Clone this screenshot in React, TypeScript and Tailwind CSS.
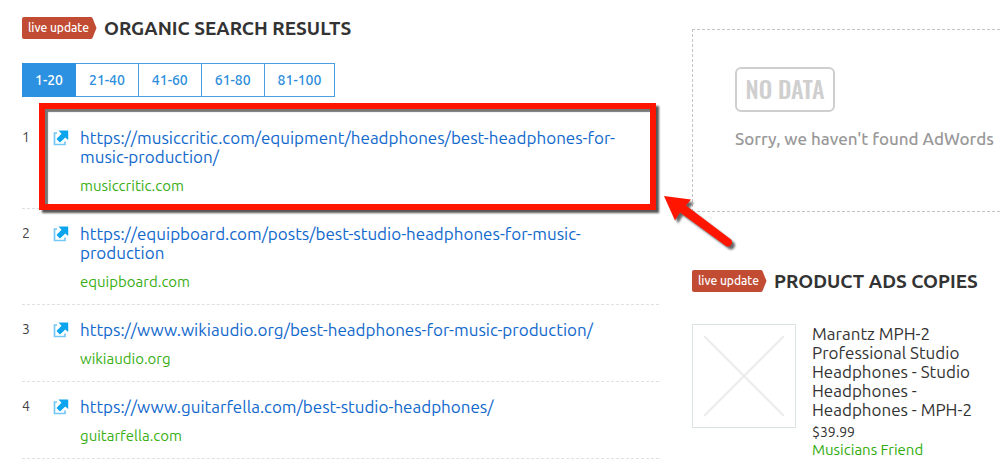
const pages = ["1-20", "21-40", "41-60", "61-80", "81-100"];

const results = [
  {
    url: "https://musiccritic.com/equipment/headphones/best-headphones-for-music-production/",
    domain: "musiccritic.com",
    highlighted: true,
  },
  {
    url: "https://equipboard.com/posts/best-studio-headphones-for-music-production",
    domain: "equipboard.com",
  },
  {
    url: "https://www.wikiaudio.org/best-headphones-for-music-production/",
    domain: "wikiaudio.org",
  },
  {
    url: "https://www.guitarfella.com/best-studio-headphones/",
    domain: "guitarfella.com",
  },
];

function SectionHeading({ children }: { children: string }) {
  return (
    <div className="flex items-center gap-[7px]">
      <span className="relative flex h-[22px] w-[75px] shrink-0 items-center pl-[6px] text-[12px] font-medium whitespace-nowrap text-white">
        <svg className="absolute inset-0" width="75" height="22" viewBox="0 0 75 22" aria-hidden="true">
          <path d="M2 0H68.500Q70 0 70.500 1L74.500 11L70.500 21Q70 22 68.500 22H2Q0 22 0 20V2Q0 0 2 0Z" fill="#c14b33" />
        </svg>
        <span className="relative">live update</span>
      </span>
      <h2 className="text-[19px] leading-[22px] font-bold whitespace-nowrap text-[#333]">{children}</h2>
    </div>
  );
}

function OpenIcon() {
  return (
    <svg width="16" height="16" viewBox="0 0 16 16" aria-hidden="true">
      <path d="M4 3H1.500V14.500H12V11.500" fill="none" stroke="#74c8f5" strokeWidth="1.700" />
      <path d="M5.500 0.500H15.200V10L12.300 7.500L7 12.500L3.500 9L8.500 3.700Z" fill="#0aa5ee" />
    </svg>
  );
}

function Highlight() {
  return (
    <>
      <div className="pointer-events-none absolute -top-[10px] right-[3px] -bottom-[2px] left-[17px] border-6 border-[#ff1500] shadow-[3px_3px_2px_#555,inset_3px_3px_1px_#777]" />
      <svg
        className="pointer-events-none absolute top-[77px] -right-[81px] z-10 drop-shadow-[3px_3px_1px_#666]"
        width="80"
        height="62"
        viewBox="0 0 80 62"
        aria-hidden="true"
      >
        <path d="M4 6L31 9.500L26 15.500L71 49.500Q73 52 71 55Q69 57.500 66 56L20 22.500L15 30.500Z" fill="#ff1500" />
      </svg>
    </>
  );
}

function OrganicResults() {
  return (
    <section className="pt-[17px]">
      <SectionHeading>ORGANIC SEARCH RESULTS</SectionHeading>
      <div className="mt-6 flex text-[14px] font-medium">
        {pages.map((page, i) => (
          <button
            key={page}
            type="button"
            className={
              i === 0
                ? "h-[34px] border border-[#2b91e0] bg-[#2b91e0] px-3 text-white"
                : "h-[34px] border border-l-0 border-[#4a9fe3] px-[13px] text-[#2b8ddb]"
            }
          >
            {page}
          </button>
        ))}
      </div>
      <ol className="mt-4">
        {results.map((result, i) => (
          <li
            key={result.url}
            className="relative flex border-b border-dashed border-[#dde1e1] pt-[15px] pb-3"
          >
            <span className="w-[31px] shrink-0 text-[14px] leading-[19px] text-[#444]">{i + 1}</span>
            <a href={result.url} aria-label="Open in new tab" className="w-[27px] shrink-0 pt-[2px]">
              <OpenIcon />
            </a>
            <div className="min-w-0">
              <a href={result.url} className="block text-[17px] leading-[19px] text-[#1269cc]">
                {result.url}
              </a>
              <a href={`https://${result.domain}`} className="mt-[10px] block text-[15px] leading-5 text-[#3aae16]">
                {result.domain}
              </a>
            </div>
            {result.highlighted && <Highlight />}
          </li>
        ))}
      </ol>
    </section>
  );
}

function AdsColumn() {
  return (
    <section className="min-w-0 pt-[29px]">
      <div className="h-[183px] border border-r-0 border-dashed border-[#c4c4c4] pt-[37px] pl-[42px]">
        <div className="flex h-[45px] w-[100px] items-center justify-center rounded-md border-2 border-[#cfcfcf] pb-1 font-['Oswald','Liberation_Sans_Narrow','Liberation_Sans',sans-serif] text-[24px] font-medium whitespace-nowrap text-[#cfcfcf]">
          NO DATA
        </div>
        <p className="mt-[15px] text-[17px] leading-6 font-medium whitespace-nowrap text-[#999]">
          Sorry, we haven't found AdWords
        </p>
      </div>
      <div className="mt-[58px]">
        <SectionHeading>PRODUCT ADS COPIES</SectionHeading>
      </div>
      <div className="mt-8 flex gap-4">
        <div className="flex size-[104px] shrink-0 items-center justify-center border border-[#dce3e3]">
          <svg width="82" height="82" viewBox="0 0 82 82" aria-hidden="true">
            <path d="M1 1L81 81M81 1L1 81" stroke="#ececec" strokeWidth="2" />
          </svg>
        </div>
        <div className="w-[168px]">
          <h3 className="text-[17px] leading-[19px] text-[#333]">
            Marantz MPH-2 Professional Studio Headphones - Studio Headphones - Headphones - MPH-2
          </h3>
          <p className="mt-[5px] text-[14px] leading-[17px] text-[#333]">$39.99</p>
          <a href="#musicians-friend" className="block text-[15px] leading-[17px] text-[#2fab0c]">
            Musicians Friend
          </a>
        </div>
      </div>
    </section>
  );
}

export default function App() {
  return (
    <main className="grid grid-cols-[637fr_308fr] gap-[33px] overflow-hidden bg-white pl-[22px] font-['Ubuntu','Noto_Sans',sans-serif]">
      <OrganicResults />
      <AdsColumn />
    </main>
  );
}
